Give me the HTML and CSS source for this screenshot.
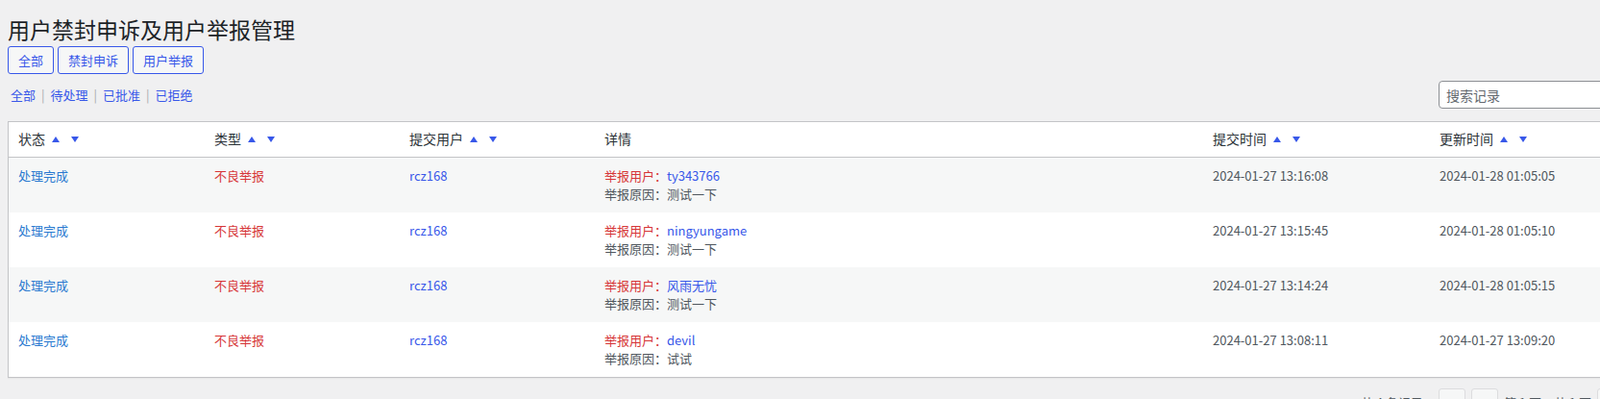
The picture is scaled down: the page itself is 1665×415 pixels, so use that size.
FILE: index.html
```html
<!DOCTYPE html>
<html lang="zh-CN">
<head>
    <meta charset="UTF-8">
    <meta name="viewport" content="width=device-width, initial-scale=1.0">
    <title>用户禁封申诉及用户举报管理</title>
    <link rel="stylesheet" href="styles.css">
</head>
<body>
    <div class="wrap">
        <h1 class="page-title">用户禁封申诉及用户举报管理</h1>

        <!-- 类型切换 -->
        <div class="type-filter">
            <button class="button">全部</button>
            <button class="button">禁封申诉</button>
            <button class="button">用户举报</button>
        </div>

        <!-- 状态筛选 + 搜索 -->
        <div class="tablenav-top">
            <ul class="subsubsub">
                <li><a href="#">全部</a><span class="sep">|</span></li>
                <li><a href="#">待处理</a><span class="sep">|</span></li>
                <li><a href="#">已批准</a><span class="sep">|</span></li>
                <li><a href="#">已拒绝</a></li>
            </ul>
            <input class="search-input" type="search" placeholder="搜索记录">
        </div>

        <!-- 记录列表 -->
        <table class="records">
            <colgroup>
                <col style="width: 204px">
                <col style="width: 203px">
                <col style="width: 203px">
                <col style="width: 633px">
                <col style="width: 236px">
                <col style="width: 239px">
            </colgroup>
            <thead>
                <tr>
                    <th>状态<span class="sort sort-up"></span><span class="sort sort-down"></span></th>
                    <th>类型<span class="sort sort-up"></span><span class="sort sort-down"></span></th>
                    <th>提交用户<span class="sort sort-up"></span><span class="sort sort-down"></span></th>
                    <th>详情</th>
                    <th>提交时间<span class="sort sort-up"></span><span class="sort sort-down"></span></th>
                    <th>更新时间<span class="sort sort-up"></span><span class="sort sort-down"></span></th>
                </tr>
            </thead>
            <tbody>
                <tr>
                    <td><a class="status-done" href="#">处理完成</a></td>
                    <td><span class="type-bad">不良举报</span></td>
                    <td><a href="#">rcz168</a></td>
                    <td>
                        <div><span class="type-bad">举报用户：</span><a href="#">ty343766</a></div>
                        <div>举报原因：测试一下</div>
                    </td>
                    <td>2024-01-27 13:16:08</td>
                    <td>2024-01-28 01:05:05</td>
                </tr>
                <tr>
                    <td><a class="status-done" href="#">处理完成</a></td>
                    <td><span class="type-bad">不良举报</span></td>
                    <td><a href="#">rcz168</a></td>
                    <td>
                        <div><span class="type-bad">举报用户：</span><a href="#">ningyungame</a></div>
                        <div>举报原因：测试一下</div>
                    </td>
                    <td>2024-01-27 13:15:45</td>
                    <td>2024-01-28 01:05:10</td>
                </tr>
                <tr>
                    <td><a class="status-done" href="#">处理完成</a></td>
                    <td><span class="type-bad">不良举报</span></td>
                    <td><a href="#">rcz168</a></td>
                    <td>
                        <div><span class="type-bad">举报用户：</span><a href="#">风雨无忧</a></div>
                        <div>举报原因：测试一下</div>
                    </td>
                    <td>2024-01-27 13:14:24</td>
                    <td>2024-01-28 01:05:15</td>
                </tr>
                <tr>
                    <td><a class="status-done" href="#">处理完成</a></td>
                    <td><span class="type-bad">不良举报</span></td>
                    <td><a href="#">rcz168</a></td>
                    <td>
                        <div><span class="type-bad">举报用户：</span><a href="#">devil</a></div>
                        <div>举报原因：试试</div>
                    </td>
                    <td>2024-01-27 13:08:11</td>
                    <td>2024-01-27 13:09:20</td>
                </tr>
            </tbody>
        </table>

        <!-- 分页 -->
        <div class="tablenav-bottom">
            <span class="displaying-num">共 4 条记录</span>
            <span class="page-btn">«</span>
            <span class="page-btn">‹</span>
            <span class="paging-info">第 1 页，共 1 页</span>
            <span class="page-btn">›</span>
            <span class="page-btn">»</span>
        </div>
    </div>
</body>
</html>
```

FILE: styles.css
```css
html, body {
    overflow: hidden;
}
body {
    margin: 0;
    padding: 15px 8px 0;
    background: #f0f0f1;
    font-family: "Noto Sans CJK SC", "Noto Sans", sans-serif;
    font-size: 13px;
    color: #3c434a;
}
a {
    color: #3858e9;
    text-decoration: none;
}
.wrap {
    width: 1720px;
}
.page-title {
    margin: 0;
    font-size: 23px;
    font-weight: 400;
    line-height: 30px;
    color: #1d2327;
}
.type-filter {
    display: flex;
    gap: 4px;
    margin-top: 3px;
}
.button {
    height: 29px;
    padding: 0 10px;
    border: 1px solid #3858e9;
    border-radius: 3px;
    background: #f6f7f7;
    color: #3858e9;
    font-family: inherit;
    font-size: 13px;
    line-height: 27px;
    cursor: pointer;
}
.tablenav-top {
    display: flex;
    justify-content: space-between;
    align-items: center;
    margin-top: 7px;
}
.subsubsub {
    display: flex;
    margin: 0;
    padding: 0 0 0 3px;
    list-style: none;
    line-height: 26px;
}
.sep {
    margin: 0 6px;
    color: #a7aaad;
}
.search-input {
    width: 231px;
    height: 29px;
    box-sizing: border-box;
    padding: 0 7px;
    border: 1px solid #8c8f94;
    border-radius: 4px;
    background: #fff;
    font-family: inherit;
    font-size: 14px;
    color: #2c3338;
}
.search-input::placeholder {
    color: #646970;
}
.records {
    width: 1720px;
    margin-top: 13px;
    table-layout: fixed;
    border-collapse: separate;
    border-spacing: 0;
    border: 1px solid #c3c4c7;
    background: #fff;
    box-shadow: 0 1px 1px rgba(0, 0, 0, 0.04);
}
.records th {
    padding: 8px 10px;
    border-bottom: 1px solid #c3c4c7;
    text-align: left;
    font-size: 14px;
    font-weight: 400;
    line-height: 19.6px;
    color: #2c3338;
}
.records td {
    padding: 9px 10px;
    vertical-align: top;
    line-height: 19.5px;
    color: #50575e;
}
.records tbody tr:nth-child(odd) {
    background: #f6f7f7;
}
.sort {
    display: inline-block;
    width: 0;
    height: 0;
    border-left: 4px solid transparent;
    border-right: 4px solid transparent;
    vertical-align: middle;
    position: relative;
    top: -1px;
}
.sort-up {
    margin-left: 7px;
    border-bottom: 6px solid #3858e9;
}
.sort-down {
    margin-left: 12px;
    border-top: 6px solid #3858e9;
}
.status-done {
    color: #2a7ad0;
}
.type-bad {
    color: #d63638;
}
.tablenav-bottom {
    display: flex;
    justify-content: flex-end;
    align-items: center;
    gap: 6px;
    margin-top: 11px;
    padding-right: 4px;
    color: #50575e;
}
.displaying-num {
    margin-right: 10px;
}
.page-btn {
    display: flex;
    align-items: center;
    justify-content: center;
    width: 28px;
    height: 30px;
    box-sizing: border-box;
    border: 1px solid #dcdcde;
    border-radius: 3px;
    background: #f6f7f7;
    color: #a7aaad;
    font-size: 16px;
}
```
